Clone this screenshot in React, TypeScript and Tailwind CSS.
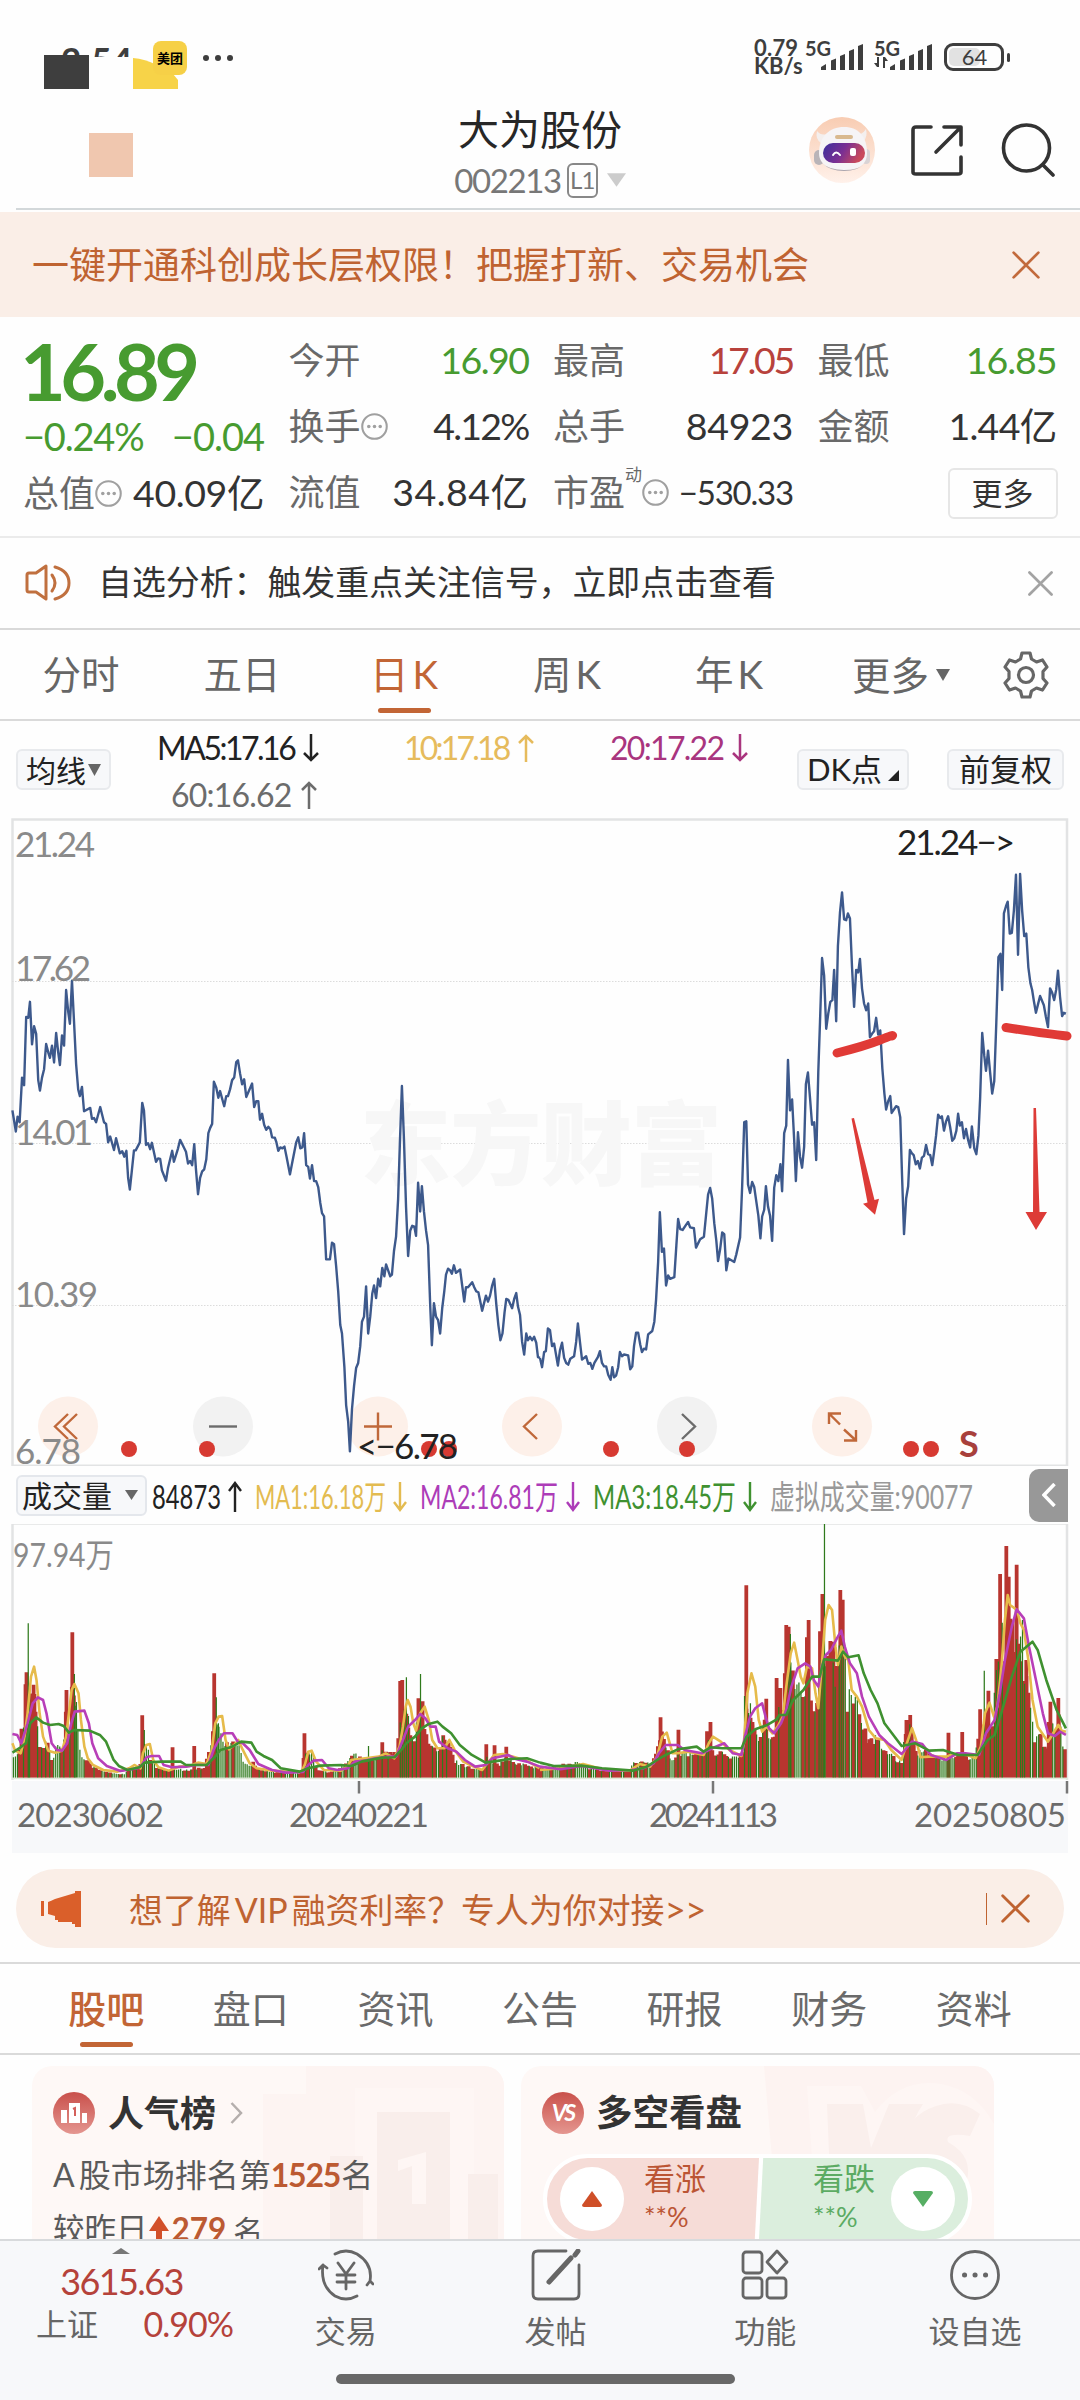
import React from 'react';

// Daily closes, plotted in chart units (two halves of the window, 1568 units wide each)
const PRICE_LEFT =
  '36,690 46,740 51,705 57,718 64,612 70,630 76,468 82,470 87,432 93,533 99,490 105,508 111,618 116,643 122,612 128,592 134,532 140,552 145,565 151,536 157,576 163,506 169,552 174,582 180,512 186,536 192,404 198,455 203,484 209,382 215,480 221,580 227,640 232,656 238,634 244,692 262,684 267,710 273,708 279,718 291,682 302,718 308,722 314,766 320,752 331,784 337,756 348,792 355,787 361,800 367,786 372,850 377,878 383,832 389,785 394,785 406,766 413,672 418,690 424,772 430,768 436,782 441,767 453,812 459,804 465,805 470,832 482,857 488,826 500,786 505,812 517,780 523,760 529,770 540,788 546,816 552,810 558,820 564,770 569,830 575,889 581,850 587,835 593,830 599,806 605,744 610,732 616,722 621,622 628,636 634,660 639,644 651,680 657,656 662,656 668,640 674,618 680,612 686,575 691,571 697,602 703,628 709,616 715,658 732,626 738,682 744,668 750,668 755,712 761,698 767,724 773,736 779,729 785,735 790,754 798,755 802,764 808,786 814,778 820,780 826,776 832,800 842,842 848,816 860,766 866,754 872,780 878,778 883,744 889,820 895,824 900,852 906,820 912,858 918,858 924,872 930,910 935,934 941,942 947,1044 958,1044 964,1004 970,1008 976,1060 982,1120 988,1200 993,1220 1000,1300 1005,1390 1011,1430 1016,1500 1022,1400 1028,1345 1034,1302 1040,1290 1046,1250 1051,1192 1057,1180 1063,1108 1069,1220 1075,1180 1081,1125 1086,1106 1092,1136 1098,1090 1104,1108 1110,1064 1116,1084 1121,1056 1127,1070 1133,1084 1138,1080 1144,1024 1150,990 1156,900 1161,770 1167,632 1173,760 1179,920 1185,1036 1191,976 1197,964 1203,966 1208,988 1214,862 1220,930 1225,870 1231,930 1237,975 1243,1010 1249,1150 1254,1248 1260,1148 1266,1180 1272,1188 1278,1220 1284,1160 1290,1120 1295,1080 1301,1066 1307,1070 1312,1078 1318,1058 1324,1076 1330,1072 1336,1068 1342,1106 1348,1144 1353,1110 1359,1110 1371,1098 1377,1110 1383,1120 1389,1122 1400,1166 1411,1130 1417,1144 1423,1130 1429,1106 1435,1090 1441,1150 1447,1200 1453,1236 1459,1220 1465,1170 1470,1138 1476,1140 1487,1160 1493,1138 1499,1124 1504,1156 1510,1176 1516,1240 1522,1270 1528,1220 1533,1236 1539,1228 1545,1236 1551,1228 1557,1242 1562,1276 1568,1278';
const PRICE_RIGHT =
  '0,1278 6,1300 12,1264 17,1262 23,1208 29,1212 35,1250 41,1244 52,1296 58,1260 64,1242 70,1278 76,1290 82,1294 88,1280 99,1274 105,1240 110,1196 116,1240 122,1282 134,1274 140,1292 146,1290 152,1304 158,1290 168,1276 174,1262 180,1290 186,1298 192,1298 198,1318 205,1330 210,1300 215,1324 221,1320 227,1300 232,1264 238,1274 244,1270 256,1272 262,1305 268,1298 273,1250 279,1218 285,1218 291,1246 296,1264 302,1256 308,1258 314,1222 326,1214 332,1192 337,1140 343,1050 348,932 354,1026 360,1018 366,1106 372,1082 378,1090 390,1086 396,1010 401,948 407,972 414,974 424,962 430,955 436,968 447,970 453,1016 465,996 476,990 482,940 488,890 494,874 500,900 506,958 512,1000 517,1048 523,1020 529,980 535,984 541,1070 547,1042 564,1050 570,1032 581,992 587,870 593,718 599,716 604,866 610,886 616,860 622,872 628,906 634,940 640,994 645,942 651,926 656,870 662,918 668,940 674,1000 680,874 686,844 692,858 698,818 703,882 709,744 715,726 720,570 726,690 732,664 738,760 743,858 749,742 755,800 761,826 767,776 772,628 778,600 784,660 790,724 796,718 802,808 808,600 813,480 819,328 825,370 831,496 837,460 843,432 849,428 854,356 860,478 865,300 871,220 877,172 883,236 889,238 894,222 900,234 906,350 912,444 918,356 924,362 929,330 935,400 941,436 947,452 953,436 958,516 964,508 970,502 976,470 982,510 988,500 994,590 1000,650 1005,688 1011,668 1017,656 1021,696 1034,680 1040,682 1046,706 1051,840 1057,984 1063,900 1069,870 1074,784 1080,792 1085,796 1091,818 1097,810 1103,828 1109,802 1115,798 1121,772 1127,794 1133,796 1139,820 1144,790 1150,750 1156,700 1162,708 1167,704 1173,738 1179,716 1185,704 1191,730 1197,762 1203,756 1209,738 1214,698 1219,726 1225,718 1231,756 1237,734 1243,760 1249,778 1254,728 1261,780 1267,794 1273,750 1278,660 1284,506 1290,560 1295,596 1301,548 1307,600 1313,650 1319,620 1325,480 1331,326 1337,318 1342,404 1347,222 1353,205 1358,194 1364,270 1370,268 1376,215 1382,130 1388,320 1394,128 1400,216 1406,276 1412,270 1418,350 1424,388 1429,404 1434,430 1440,458 1446,438 1452,418 1463,440 1469,468 1475,492 1481,400 1487,410 1493,428 1499,402 1504,358 1510,420 1516,466 1521,458 1527,460';

// Typical volume level per position (x, top), filled with one bar per trading day
const VOLUME_LEFT =
  '36,880 45,890 58,870 62,795 68,800 73,640 95,640 100,700 110,790 115,860 125,870 130,830 140,850 150,900 158,880 165,820 175,870 185,840 190,700 200,850 205,760 210,650 220,700 228,840 236,878 250,890 265,915 290,930 320,938 360,942 380,925 405,920 412,880 425,840 440,900 460,925 490,930 510,925 540,930 570,925 595,920 603,870 612,855 620,800 632,780 645,830 655,850 680,840 695,850 705,900 725,918 735,900 750,925 790,935 830,938 875,938 885,870 905,880 920,925 950,935 985,925 1010,900 1030,880 1060,895 1090,890 1115,870 1150,880 1160,800 1175,750 1190,790 1205,840 1212,760 1230,760 1245,850 1260,860 1275,870 1285,830 1305,850 1320,900 1350,915 1380,925 1405,930 1412,890 1430,900 1450,910 1470,890 1500,910 1530,912 1568,925';
const VOLUME_RIGHT =
  '0,925 60,915 110,905 140,925 200,932 260,930 275,900 290,905 310,910 330,900 340,850 352,800 362,840 385,905 400,880 430,875 460,880 480,870 490,830 505,870 540,880 570,890 588,870 592,640 605,740 615,790 635,840 645,800 655,770 668,830 680,820 690,730 705,720 712,600 725,560 740,640 752,640 762,720 775,620 785,700 798,750 808,700 814,560 822,500 835,580 850,560 862,650 868,520 885,560 892,720 905,670 920,700 935,760 950,830 975,830 1000,860 1030,890 1050,905 1060,800 1080,790 1090,870 1120,870 1150,890 1180,890 1210,880 1260,890 1275,800 1290,780 1300,740 1312,800 1325,620 1335,560 1345,560 1355,440 1365,440 1375,520 1390,480 1400,600 1415,610 1425,750 1437,830 1450,815 1470,870 1480,760 1495,820 1505,760 1520,850 1529,890';

const RED_SPIKES_LEFT: number[][] = [[77, 637], [210, 517], [193, 690], [100, 702], [413, 766], [501, 862], [564, 858], [622, 640], [884, 820], [1110, 847], [1162, 663], [1168, 660], [1215, 715], [1227, 724], [1287, 826], [1412, 853], [1436, 856], [1470, 860]];
const GREEN_SPIKES_LEFT: number[][] = [[82, 490], [216, 642], [222, 726], [419, 810], [628, 712], [634, 790], [1070, 858], [1180, 652], [1186, 768], [1221, 642]];
const RED_SPIKES_RIGHT: number[][] = [[350, 772], [402, 809], [495, 786], [485, 814], [599, 376], [617, 786], [657, 716], [687, 654], [698, 684], [715, 495], [722, 500], [775, 532], [780, 480], [820, 402], [813, 514], [843, 543], [852, 545], [872, 390], [879, 419], [1064, 780], [1075, 765], [1186, 818], [1226, 816], [1278, 748], [1302, 692], [1325, 597], [1336, 342], [1354, 258], [1361, 350], [1384, 314], [1396, 604], [1412, 600], [1482, 725], [1505, 714]];
const GREEN_SPIKES_RIGHT: number[][] = [[611, 730], [727, 522], [826, 190], [1290, 632], [1342, 488], [1401, 480], [1424, 752]];

const MA_LEFT = [
  { color: '#e6bb4a', points: '36,850 44,872 60,880 70,840 80,760 90,650 99,620 106,660 115,760 125,830 140,872 160,878 180,872 192,830 200,760 208,690 216,672 228,700 235,780 245,860 255,895 270,915 300,930 340,935 375,925 390,915 408,925 415,880 425,855 435,852 445,900 460,922 490,932 520,920 550,918 575,908 600,912 615,870 625,790 635,770 645,768 655,840 665,868 680,855 692,840 705,870 725,910 745,925 790,932 830,935 875,935 885,915 895,875 905,872 918,905 940,930 990,932 1010,918 1020,900 1060,895 1100,890 1120,880 1145,895 1160,860 1170,800 1178,740 1184,720 1192,740 1200,790 1208,812 1220,760 1233,740 1245,780 1255,840 1270,865 1290,865 1305,840 1320,870 1345,905 1375,920 1400,930 1415,910 1435,885 1460,882 1490,890 1530,902 1568,926' },
  { color: '#b83fb8', points: '36,822 50,825 62,850 80,790 95,730 110,712 125,720 135,760 150,850 165,870 180,872 195,850 207,790 217,755 245,752 258,790 268,850 285,895 310,918 350,933 400,925 412,915 425,892 440,888 462,888 475,915 500,922 540,920 570,915 605,915 620,870 635,840 650,820 675,820 690,845 705,850 725,870 750,912 790,930 830,938 880,936 895,915 910,902 935,900 955,925 980,930 1010,925 1030,905 1060,902 1090,895 1130,890 1150,890 1170,840 1185,800 1205,780 1220,762 1235,775 1250,800 1265,800 1275,845 1300,865 1325,875 1350,900 1380,920 1410,915 1430,895 1475,885 1500,898 1530,905 1568,920' },
  { color: '#3f9130', points: '36,878 60,862 75,850 88,790 105,772 125,788 145,795 170,792 185,798 200,818 215,810 260,812 290,825 308,845 318,870 330,900 345,918 370,930 405,922 420,908 470,905 525,905 540,915 600,915 620,895 640,870 670,862 700,845 730,848 745,875 765,888 790,900 815,925 870,935 895,925 930,917 990,915 1020,918 1050,905 1110,893 1145,892 1165,870 1180,850 1205,830 1225,805 1245,792 1270,785 1285,800 1310,820 1335,855 1370,885 1410,908 1450,902 1480,897 1530,895 1568,908' },
];
const MA_RIGHT = [
  { color: '#e6bb4a', points: '0,930 60,925 125,912 190,930 260,932 290,912 320,920 340,890 355,830 368,818 385,880 400,880 430,875 475,885 490,850 502,830 525,845 550,870 585,888 592,850 602,700 614,640 625,680 635,780 645,815 658,800 675,820 690,800 705,770 715,680 728,580 738,548 748,600 757,650 765,670 775,620 790,625 800,700 808,745 818,620 828,480 838,435 848,450 858,560 865,615 875,560 885,590 895,600 905,690 920,710 935,740 955,810 975,835 1000,840 1020,870 1050,900 1065,850 1080,805 1092,840 1105,892 1130,890 1180,890 1200,882 1240,885 1265,895 1280,860 1292,760 1305,728 1318,770 1328,740 1340,620 1350,480 1358,405 1365,435 1385,450 1395,490 1405,510 1418,600 1430,720 1445,800 1475,845 1490,820 1505,795 1515,812 1527,815' },
  { color: '#b83fb8', points: '0,920 60,928 120,918 200,932 265,930 300,925 330,910 345,880 365,855 400,855 420,870 470,880 500,865 535,850 560,880 585,885 595,830 610,770 625,745 645,730 655,770 665,805 680,820 700,790 715,750 730,680 748,625 770,610 785,620 795,660 808,680 818,620 830,585 845,570 862,535 875,512 885,560 900,610 920,640 935,710 955,770 985,825 1010,850 1050,882 1080,845 1110,852 1135,885 1180,900 1210,880 1235,880 1275,885 1295,820 1320,780 1335,700 1350,600 1370,500 1384,448 1405,475 1420,560 1440,660 1460,760 1475,820 1495,828 1510,815 1527,825' },
  { color: '#3f9130', points: '0,908 40,918 120,917 180,925 270,932 310,920 340,900 365,885 400,868 455,860 475,875 495,862 530,865 585,865 600,830 625,808 660,795 685,780 695,765 715,765 735,720 765,690 790,650 812,650 825,598 865,602 880,575 895,592 925,586 940,640 960,690 980,730 1000,790 1050,858 1090,850 1130,872 1170,870 1215,885 1270,885 1300,840 1320,825 1345,740 1370,650 1395,575 1430,545 1445,570 1470,660 1500,750 1527,805' },
];

const VOLUME_BASE = 953;
const DAY_STEP = 5.85;

function toPoints(text: string) {
  return text.split(' ').map((pair) => pair.split(',').map(Number));
}

function levelAt(points: number[][], x: number) {
  for (let i = 1; i < points.length; i++) {
    const [x0, y0] = points[i - 1];
    const [x1, y1] = points[i];
    if (x <= x1) return y0 + ((y1 - y0) * (x - x0)) / (x1 - x0);
  }
  return points[points.length - 1][1];
}

function noise(i: number) {
  const v = Math.sin(i * 127.1) * 43758.5453;
  return v - Math.floor(v);
}

function buildBars(levels: string, redSpikes: number[][], greenSpikes: number[][], seed: number) {
  const points = toPoints(levels);
  const last = points[points.length - 1][0];
  let red = '';
  let green = '';
  let i = seed;
  for (let x = points[0][0] + 3; x < last; x += DAY_STEP) {
    const height = (VOLUME_BASE - levelAt(points, x)) * (0.8 + 0.25 * noise(i));
    const bar = `M${x.toFixed(1)} ${VOLUME_BASE}v${-height.toFixed(1)}`;
    if (noise(i + 1000) < 0.52) red += bar;
    else green += bar;
    i++;
  }
  redSpikes.forEach(([x, y]) => (red += `M${x} ${VOLUME_BASE}V${y}`));
  greenSpikes.forEach(([x, y]) => (green += `M${x} ${VOLUME_BASE}V${y}`));
  return { red, green };
}

const BARS_LEFT = buildBars(VOLUME_LEFT, RED_SPIKES_LEFT, GREEN_SPIKES_LEFT, 1);
const BARS_RIGHT = buildBars(VOLUME_RIGHT, RED_SPIKES_RIGHT, GREEN_SPIKES_RIGHT, 400);

function CloseIcon({ size, color, width = 2.5 }: { size: number; color: string; width?: number }) {
  return (
    <svg width={size} height={size} viewBox="0 0 26 26" fill="none" stroke={color} strokeWidth={width} strokeLinecap="round">
      <path d="M1.5 1.5 24.5 24.5M24.5 1.5 1.5 24.5" />
    </svg>
  );
}

function InfoDots() {
  return (
    <svg width="27" height="27" viewBox="0 0 26 26" fill="#a0a0a0">
      <circle cx="13" cy="13" r="11.8" fill="none" stroke="#a0a0a0" strokeWidth="2" />
      <circle cx="7.5" cy="13" r="1.7" />
      <circle cx="13" cy="13" r="1.7" />
      <circle cx="18.5" cy="13" r="1.7" />
    </svg>
  );
}

function Signal() {
  return (
    <svg width="44" height="28" viewBox="0 0 44 28" fill="#3e3e3e">
      <path d="M1 27v-3l5-3v6zM11 27V17.500l5-2V27zM20 27V13l5-2V27zM29 27V8l5-2v21zM38 27V3l5-2v26z" />
    </svg>
  );
}

function StatusBar() {
  return (
    <div className="flex h-[104px] text-[#3e3e3e]">
      <div className="relative h-full w-[250px]">
        <span className="absolute left-[61px] top-[41px] h-[16px] overflow-hidden text-[35px] font-bold leading-[37px] tracking-[0.500px]">2:54</span>
        <div className="absolute left-[44px] top-[55px] h-[34px] w-[45px] bg-[#3e3e3e]" />
        <svg className="absolute left-[133px] top-[56px]" width="46" height="33" viewBox="0 0 46 33">
          <path d="M0 2Q12 3 24 9L40 18 45 24V33H0Z" fill="#f7d348" />
        </svg>
        <div className="absolute left-[153px] top-[41px] flex h-[34px] w-[34px] items-center justify-center rounded-[8px] bg-[#f6d047] text-[13px] font-bold leading-none text-black">
          美团
        </div>
        <div className="absolute left-[203px] top-[55px] flex gap-[6px]">
          <i className="h-[6px] w-[6px] rounded-full bg-[#3e3e3e]" />
          <i className="h-[6px] w-[6px] rounded-full bg-[#3e3e3e]" />
          <i className="h-[6px] w-[6px] rounded-full bg-[#3e3e3e]" />
        </div>
      </div>
      <div className="ml-auto flex pr-[70px] pt-[39px] font-bold">
        <div className="w-[51px] text-[22px] leading-[18px]">
          <div className="tracking-[0.200px]">0.79</div>
          <div>KB/s</div>
        </div>
        <div className="flex w-[69px]">
          <span className="w-[15px] whitespace-nowrap text-[20px] leading-[18px]">5G</span>
          <div className="pt-[4px]"><Signal /></div>
        </div>
        <div className="flex w-[70px]">
          <div className="w-[15px] text-[20px] leading-[18px]">
            <span className="whitespace-nowrap">5G</span>
            <svg width="14" height="11" viewBox="0 0 14 11" fill="#3e3e3e">
              <path d="M3 0h2v10H3L0 6h3zM9 11h2V4h3l-3-4H9z" />
            </svg>
          </div>
          <div className="pt-[4px]"><Signal /></div>
        </div>
        <div className="mt-[4px] flex h-[28px] items-center">
          <div className="flex h-[28px] w-[60px] rounded-[9px] border-[3px] border-[#3e3e3e] p-[2px]">
            <div className="flex h-full w-[31px] items-center justify-center rounded-[5px] bg-[#e2e2e2]">
              <span className="pl-[20px] text-[22px] font-normal leading-none">64</span>
            </div>
          </div>
          <i className="ml-[3px] h-[9px] w-[3px] rounded bg-[#3e3e3e]" />
        </div>
      </div>
    </div>
  );
}

function RobotAvatar() {
  return (
    <svg width="68" height="68" viewBox="0 0 68 68">
      <defs>
        <linearGradient id="halo" x1="0" y1="0" x2="0" y2="1">
          <stop offset="0" stopColor="#f8ccb2" />
          <stop offset="1" stopColor="#fff1ea" />
        </linearGradient>
        <linearGradient id="visor" x1="0" y1="0" x2="1" y2="0.3">
          <stop offset="0" stopColor="#3c2f9c" />
          <stop offset="0.55" stopColor="#7a2f93" />
          <stop offset="1" stopColor="#c94a5c" />
        </linearGradient>
      </defs>
      <circle cx="34" cy="34" r="33" fill="url(#halo)" />
      <path d="M9 15q-2 8 4 12l6-9q-6 2-10-3zM58 13q2 8-3 13l-7-7q6 0 10-6z" fill="#f4efee" />
      <rect x="6" y="34" width="10" height="15" rx="5" fill="#b9b4b8" />
      <rect x="54" y="33" width="8" height="15" rx="4" fill="#d9d3d5" />
      <path d="M36 11c15 0 23 10 23 26 0 12-9 17-23 17s-25-5-25-17c0-16 10-26 25-26z" fill="#f6f4f6" />
      <path d="M14 47q8 8 22 8t20-7q-5 6-20 6t-22-7z" fill="#aaa5ae" />
      <rect x="27" y="19" width="18" height="4" rx="2" fill="#d9b98f" />
      <rect x="15" y="27" width="42" height="20" rx="10" fill="url(#visor)" />
      <path d="M25 39q3-5 7 0" fill="none" stroke="#fff" strokeWidth="2" strokeLinecap="round" />
      <rect x="42" y="32" width="6" height="8" rx="2" fill="#fff" />
    </svg>
  );
}

function Header() {
  return (
    <header className="flex h-[108px]">
      <div className="w-[400px] pl-[89px] pt-[29px]">
        <div className="h-[44px] w-[44px] bg-[#f0c7af]" />
      </div>
      <div className="flex w-[280px] flex-col items-center">
        <h1 className="mt-[4px] text-[41px] leading-[44px] text-[#272727]">大为股份</h1>
        <div className="mt-[9px] flex h-[38px] items-center text-[#777]">
          <span className="text-[33px] leading-none tracking-[-1.400px]">002213</span>
          <span className="ml-[6px] flex h-[35px] w-[31px] items-center justify-center rounded-[6px] border-2 border-[#888] text-[24px] leading-none tracking-[-1px]">L1</span>
          <svg className="ml-[9px]" width="19" height="14" viewBox="0 0 20 14" fill="#ccc">
            <path d="M0 0h20L10 14z" />
          </svg>
        </div>
      </div>
      <div className="flex w-[400px] pl-[128px]">
        <div className="w-[103px] pt-[12px]"><RobotAvatar /></div>
        <svg className="mt-[20px]" width="52" height="52" viewBox="0 0 52 52" fill="none" stroke="#333" strokeWidth="3.600" strokeLinecap="round" strokeLinejoin="round">
          <path d="M20 3H5Q2 3 2 6v42q0 2 3 2h42q3 0 3-2V33M33 3h17v18M49 4 25 28" />
        </svg>
        <svg className="ml-[38px] mt-[19px]" width="54" height="54" viewBox="0 0 54 54" fill="none" stroke="#333" strokeWidth="3.600" strokeLinecap="round">
          <circle cx="25.500" cy="25" r="23" />
          <path d="M42 42 52 52" />
        </svg>
      </div>
    </header>
  );
}

function Stat({ label, value, className = 'text-[#333]', children }: { label: string; value: string; className?: string; children?: React.ReactNode }) {
  return (
    <div className="flex h-[66px] items-center justify-between text-[37.500px] leading-none">
      <span className="flex items-center text-[36px] text-[#696969]">
        {label}
        {children}
      </span>
      <span className={`whitespace-nowrap ${className}`}>{value}</span>
    </div>
  );
}

function Quote() {
  return (
    <section className="grid h-[221px] grid-cols-[241px_240px_240px_239px] gap-x-[24.500px] border-b-2 border-[#ebebeb] pl-[23px] pt-[10px]">
      <div>
        <div className="-ml-[3px] h-[86px] pt-[5px] text-[79px] font-bold leading-[78px] tracking-[-5.500px] text-[#479b30]">16.89</div>
        <div className="flex h-[47px] items-center justify-between text-[38px] leading-[47px] text-[#479b30]">
          <span className="tracking-[-1.200px]">−0.24%</span>
          <span className="tracking-[-1px]">−0.04</span>
        </div>
        <Stat label="总值" value="40.09亿" className="tracking-[-0.400px] text-[#333]"><InfoDots /></Stat>
      </div>
      <div>
        <Stat label="今开" value="16.90" className="tracking-[-1.500px] text-[#479b30]" />
        <Stat label="换手" value="4.12%" className="tracking-[-1.800px] text-[#333]"><InfoDots /></Stat>
        <Stat label="流值" value="34.84亿" className="text-[#333] tracking-[0.500px]" />
      </div>
      <div>
        <Stat label="最高" value="17.05" className="tracking-[-2.300px] text-[#b8423c]" />
        <Stat label="总手" value="84923" className="tracking-[-0.300px] text-[#333]" />
        <Stat label="市盈" value="−530.33" className="text-[33px] tracking-[-1.200px] text-[#333]">
          <sup className="top-[-18px] text-[17px] leading-none">动</sup>
          <InfoDots />
        </Stat>
      </div>
      <div>
        <Stat label="最低" value="16.85" className="tracking-[-1px] text-[#479b30]" />
        <Stat label="金额" value="1.44亿" className="tracking-[-0.700px] text-[#333]" />
        <div className="-mr-[1px] ml-auto mt-[9px] flex h-[51px] w-[110px] items-center justify-center rounded-[6px] border-2 border-[#e6e6e6] text-[31px] leading-none text-[#333]">更多</div>
      </div>
    </section>
  );
}

function Notice() {
  return (
    <div className="flex h-[92px] items-center border-b-2 border-[#d9d9d9] pl-[24px] pr-[27px]">
      <svg width="48" height="40" viewBox="0 0 48 40" fill="none" stroke="#c0703f" strokeWidth="3" strokeLinejoin="round" strokeLinecap="round">
        <path d="M22 3v33L12 29H5q-2 0-2-2V12q0-2 2-2h7zM28 12q6 8 0 16M31 4q14 4 14 16T31 36" />
      </svg>
      <p className="ml-[26px] text-[33.900px] leading-none text-[#333]">自选分析：触发重点关注信号，立即点击查看</p>
      <div className="ml-auto"><CloseIcon size={25} color="#a3a3a3" width={2.8} /></div>
    </div>
  );
}

function PeriodTabs() {
  return (
    <nav className="flex h-[91px] border-b-2 border-[#dadada] text-[38.500px] leading-[88px] text-[#666]">
      <span className="w-[162px] text-center">分时</span>
      <span className="w-[160px] text-center">五日</span>
      <span className="flex w-[164px] flex-col items-center whitespace-pre text-[#c26535]">
        <span className="h-[78px]">日<span className="ml-[4px]">K</span></span>
        <i className="h-[5px] w-[53px] rounded bg-[#c26535]" />
      </span>
      <span className="w-[162px] text-center">周<span className="ml-[4px]">K</span></span>
      <span className="w-[162px] text-center">年<span className="ml-[4px]">K</span></span>
      <span className="ml-[42px] flex items-center">
        更多
        <svg className="ml-[7px]" width="14" height="12" viewBox="0 0 14 12" fill="#666"><path d="M0 0h14L7 12z" /></svg>
      </span>
      <svg className="ml-[52px] mt-[21px]" width="48" height="48" viewBox="0 0 48 48" fill="none" stroke="#666" strokeWidth="3.200" strokeLinejoin="round">
        <path d="M20 2h8l1.500 6 5 3 6-2 4.500 7-4 4.500v7l4 4.500-4.500 7-6-2-5 3L28 46h-8l-1.500-6-5-3-6 2L3 32l4-4.500v-7L3 16l4.500-7 6 2 5-3z" />
        <circle cx="24" cy="24" r="7.500" />
      </svg>
    </nav>
  );
}

function AverageRow() {
  return (
    <div className="flex h-[97px] pl-[16px] text-[31px] leading-none text-[#222]">
      <div className="mt-[28px] flex h-[41px] w-[95px] items-center justify-center rounded-[6px] border-2 border-[#e8eaed] bg-[#f7f8fa] text-[30px]">
        均线
        <svg className="ml-[2px]" width="13" height="12" viewBox="0 0 13 12" fill="#666"><path d="M0 0h13L6.500 12z" /></svg>
      </div>
      <div className="ml-[46px] mt-[3px] grid h-[94px] w-[601px] grid-cols-[247px_206px_148px] grid-rows-[47px_47px] items-center text-[32px]">
        <span className="flex items-center tracking-[-2.500px]">MA5:17.16<Arrow color="#222" /></span>
        <span className="flex items-center tracking-[-2.800px] text-[#e6bb5c]">10:17.18<Arrow color="#e6bb5c" up /></span>
        <span className="flex items-center tracking-[-1.700px] text-[#a9357e]">20:17.22<Arrow color="#a9357e" /></span>
        <span className="flex items-center pl-[14px] tracking-[-0.800px] text-[#6c6c6c]">60:16.62<Arrow color="#6c6c6c" up /></span>
      </div>
      <div className="ml-[39px] mt-[28px] flex h-[41px] w-[112px] items-center justify-center rounded-[6px] border-2 border-[#e8eaed] bg-[#f7f8fa]">
        DK点
        <svg className="ml-[6px] mt-[12px]" width="11" height="11" viewBox="0 0 11 11"><path d="M11 0v11H0z" fill="#222" /></svg>
      </div>
      <div className="ml-[38px] mt-[28px] flex h-[41px] w-[117px] items-center justify-center rounded-[6px] border-2 border-[#e8eaed] bg-[#f7f8fa]">前复权</div>
    </div>
  );
}

function Arrow({ color, up = false }: { color: string; up?: boolean }) {
  return (
    <svg className="ml-[9px] shrink-0" width="16" height="28" viewBox="0 0 16 28" fill="none" stroke={color} strokeWidth="2.500">
      <path d={up ? 'M8 28V2M1 9 8 2l7 7' : 'M8 0v26M1 19l7 7 7-7'} />
    </svg>
  );
}

const TOOL_BUTTONS = [
  { x: 68, fill: '#fdf0e9', stroke: '#c0683a', d: 'M68 1414l-13 12.500 13 12.500M77 1414l-13 12.500 13 12.500' },
  { x: 223, fill: '#f2f2f2', stroke: '#6c6c6c', d: 'M209 1426.500h28' },
  { x: 378, fill: '#fdf0e9', stroke: '#c0683a', d: 'M364 1426.500h28M378 1412.500v28' },
  { x: 532, fill: '#fdf0e9', stroke: '#c0683a', d: 'M537 1414l-13 12.500 13 12.500' },
  { x: 687, fill: '#f2f2f2', stroke: '#6c6c6c', d: 'M682 1414l13 12.500-13 12.500' },
  { x: 842, fill: '#fdf0e9', stroke: '#c0683a', d: 'M829 1424v-10.500h12M829 1413.500l11 11M856 1430v10.500h-12M856 1440.500l-12-11' },
];

function PriceChart() {
  return (
    <svg className="block" width="1080" height="648" viewBox="0 818 1080 648">
      <path d="M12.500 1466V819.500H1067V1466" fill="none" stroke="#e2e3e4" strokeWidth="2.500" />
      <path d="M12 1465.500H1068" stroke="#e2e3e4" strokeWidth="2" />
      <path d="M12 981.500H1068M12 1143.500H1068M12 1305.500H1068" stroke="#dcdcdc" strokeWidth="1" strokeDasharray="1.500 1.500" />
      <text x="360" y="1178" textLength="362" fontSize="91" fontWeight="900" fill="#f7f7f7">东方财富</text>
      {TOOL_BUTTONS.map((button) => (
        <g key={button.x}>
          <circle cx={button.x} cy="1426.500" r="30" fill={button.fill} />
          <path d={button.d} fill="none" stroke={button.stroke} strokeWidth="2.400" />
        </g>
      ))}
      {[129, 207, 429, 449, 611, 687, 911, 931].map((x) => (
        <circle key={x} cx={x} cy="1449" r="8" fill="#d73a32" />
      ))}
      <text x="959" y="1456.500" fontSize="36" fontWeight="700" fill="#a8403c">S</text>
      <g fill="none" stroke="#3d598c" strokeWidth="2.400" strokeLinejoin="round">
        <polyline points={PRICE_LEFT} transform="translate(0 820) scale(.3444 .4209)" vectorEffect="non-scaling-stroke" />
        <polyline points={PRICE_RIGHT} transform="translate(540 820) scale(.3444 .4209)" vectorEffect="non-scaling-stroke" />
      </g>
      <g fontSize="35" fill="#8a8a8a">
        <text x="15" y="857" textLength="80">21.24</text>
        <text x="15" y="981" textLength="76">17.62</text>
        <text x="15" y="1144.500" textLength="78">14.01</text>
        <text x="15" y="1306.500" textLength="83">10.39</text>
        <text x="15" y="1464" textLength="66">6.78</text>
      </g>
      <g fontSize="35" fill="#222">
        <text x="897" y="854.500" textLength="118">21.24−&gt;</text>
        <text x="357" y="1459" textLength="101">&lt;−6.78</text>
      </g>
      <g stroke="#e03a36" strokeWidth="9" strokeLinecap="round" fill="none">
        <path d="M837 1053Q865 1046 880 1040T892 1036" />
        <path d="M1006 1027.500Q1048 1034 1067 1036" />
      </g>
      <g fill="#dd3b37">
        <path d="M851.500 1118.500l2.500-.5 20.500 82 4.500-1.200-4 16-12-11 4.500-1.200z" />
        <path d="M1033.500 1108h2.500l3.500 104h7.500l-11 18-10.500-18h7.500z" />
      </g>
    </svg>
  );
}

function VolumeHeader() {
  return (
    <div className="flex h-[58px] items-center pl-[16px] text-[31px] leading-none">
      <div className="flex h-[41px] w-[131px] items-center rounded-[6px] border-2 border-[#e4e7ec] bg-[#f7f8fa] pl-[4px] text-[30px] text-[#222]">
        成交量
        <svg className="ml-[13px]" width="13" height="10" viewBox="0 0 13 10" fill="#666"><path d="M0 0h13L6.500 10z" /></svg>
      </div>
      <svg width="882" height="58" viewBox="147 1466 882 58" fontSize="33">
        <g fill="#222"><text x="152" y="1509" textLength="69" lengthAdjust="spacingAndGlyphs">84873</text></g>
        <g fill="#e3bb50"><text x="255" y="1509" textLength="131" lengthAdjust="spacingAndGlyphs">MA1:16.18万</text></g>
        <g fill="#ad3cb8"><text x="420" y="1509" textLength="138" lengthAdjust="spacingAndGlyphs">MA2:16.81万</text></g>
        <g fill="#3f9130"><text x="593" y="1509" textLength="143" lengthAdjust="spacingAndGlyphs">MA3:18.45万</text></g>
        <g fill="#999"><text x="770" y="1509" textLength="203" lengthAdjust="spacingAndGlyphs">虚拟成交量:90077</text></g>
        <g fill="none" strokeWidth="2.400">
          <path d="M235 1512v-29M229 1491l6-8 6 8" stroke="#222" />
          <path d="M400 1482v28M394 1502l6 8 6-8" stroke="#e3bb50" />
          <path d="M573 1482v28M567 1502l6 8 6-8" stroke="#ad3cb8" />
          <path d="M750 1482v28M744 1502l6 8 6-8" stroke="#3f9130" />
        </g>
      </svg>
      <div className="flex h-[53px] w-[39px] items-center justify-center rounded-l-[10px] bg-[#989898]">
        <svg width="14" height="24" viewBox="0 0 14 24" fill="none" stroke="#fff" strokeWidth="3.500"><path d="M12.500 1 2 12l10.500 11" /></svg>
      </div>
    </div>
  );
}

function VolumeChart() {
  const halves = [
    { offset: 0, bars: BARS_LEFT, lines: MA_LEFT },
    { offset: 540, bars: BARS_RIGHT, lines: MA_RIGHT },
  ];
  return (
    <svg className="block" width="1080" height="329" viewBox="0 1524 1080 329">
      <path d="M12.500 1780V1523.500H1067V1780" fill="none" stroke="#e2e3e4" strokeWidth="2.500" />
      <text x="13" y="1567" fontSize="33" fill="#8a8a8a" textLength="101" lengthAdjust="spacingAndGlyphs">97.94万</text>
      {halves.map((half) => (
        <g key={half.offset} transform={`translate(${half.offset} 1460) scale(.3444 .3333)`} fill="none">
          <path d={half.bars.red} stroke="#b8352f" strokeWidth="11" />
          <path d={half.bars.green} stroke="#2f7a1c" strokeWidth="3.600" />
          {half.lines.map((line) => (
            <polyline key={line.color} points={line.points} stroke={line.color} strokeWidth="2.600" strokeLinejoin="round" vectorEffect="non-scaling-stroke" />
          ))}
        </g>
      ))}
      <path d="M12 1778.500H1068" stroke="#dfe9d9" strokeWidth="1.500" />
      <rect x="12" y="1781" width="1056" height="72" fill="#f7f8fa" />
      <path d="M359 1781v12.500M713 1781v12.500M1067 1781v12.500" stroke="#777" strokeWidth="2.500" />
      <g fontSize="33" fill="#6b6b6b">
        <text x="17" y="1827" textLength="147">20230602</text>
        <text x="289" y="1827" textLength="140">20240221</text>
        <text x="649" y="1827" textLength="129">20241113</text>
        <text x="914" y="1827" textLength="152">20250805</text>
      </g>
    </svg>
  );
}

function VipBanner() {
  return (
    <div className="mx-[16px] mt-[16px] flex h-[79px] items-center rounded-full bg-[#faeee7] pl-[25px] pr-[34px]">
      <svg width="42" height="36" viewBox="0 0 42 36" fill="#da5f2a">
        <path d="M0 10h3v15H0zM7 11Q10 10 14 8L34 2V0h6v36h-6v-3h-3v-2H17v-2h-3v-4L7 23z" />
      </svg>
      <p className="ml-[46px] whitespace-nowrap text-[33.900px] leading-none text-[#bf6331]">
        想了解<span className="mx-[4px] text-[34px]">VIP</span>融资利率？专人为你对接<span className="text-[37px] tracking-[-1px]">&gt;&gt;</span>
      </p>
      <i className="ml-auto mr-[14px] h-[32px] w-[1px] bg-[#bf6331]" />
      <CloseIcon size={29} color="#bf6331" />
    </div>
  );
}

const SECTIONS = ['股吧', '盘口', '资讯', '公告', '研报', '财务', '资料'];

function SectionTabs() {
  return (
    <nav className="mt-[14px] grid h-[93px] grid-cols-7 border-y-2 border-[#dadada] px-[34px] text-[38px] leading-[89px] text-[#6a6a6a]">
      {SECTIONS.map((name, i) => (
        <span key={name} className={i === 0 ? 'flex flex-col items-center font-medium text-[#c26535]' : 'text-center'}>
          <span className="h-[78px]">{name}</span>
          {i === 0 && <i className="h-[5px] w-[53px] rounded bg-[#c26535]" />}
        </span>
      ))}
    </nav>
  );
}

function Cards() {
  return (
    <section className="flex h-[184px] items-start gap-[17px] overflow-hidden pl-[32px] pt-[11px]">
      <div className="relative h-[220px] w-[472px] overflow-hidden rounded-[20px] bg-[#fef8f6]">
        <svg className="absolute left-0 top-0" width="473" height="220" viewBox="0 0 473 220">
          <path d="M274 0h199v220H231V28h43z" fill="#fdf4f2" />
          <path d="M323 22h119v190H323z" fill="#fef6f4" />
          <path d="M345 46h73v174h-73zM298 90h33v130h-33zM436 108h30v112h-30z" fill="#f9eeeb" />
          <path d="M394 86v52h-14v-38l-14 5V94z" fill="#fef6f4" />
        </svg>
        <div className="relative flex h-[93px] items-center pl-[21px]">
          <svg width="42" height="42" viewBox="0 0 42 42">
            <defs>
              <linearGradient id="badge" x1="0" y1="0" x2="0" y2="1">
                <stop offset="0" stopColor="#c9504b" />
                <stop offset="1" stopColor="#e49690" />
              </linearGradient>
            </defs>
            <circle cx="21" cy="21" r="21" fill="url(#badge)" />
            <path d="M8 18h6v13H8zM16 11h11v20H16zM29 21h5v10h-5z" fill="#fff" />
            <path d="M20 17l2-1v8" stroke="#d4605b" strokeWidth="2" fill="none" />
          </svg>
          <h2 className="ml-[13px] text-[36px] font-bold leading-none text-[#333]">人气榜</h2>
          <svg className="ml-[14px]" width="13" height="22" viewBox="0 0 13 22" fill="none" stroke="#b5afad" strokeWidth="2.500"><path d="M1.500 1 11 11 1.500 21" /></svg>
        </div>
        <p className="relative h-[56px] whitespace-nowrap pl-[21px] text-[32px] leading-[31px] text-[#5a5a5a]">
          A<span className="ml-[4px]">股市场排名第</span><b className="tracking-[-1.200px] text-[#bc5a32]">1525</b><span className="ml-[1px]">名</span>
        </p>
        <p className="relative flex h-[30px] items-center whitespace-nowrap pl-[21px] text-[31.500px] leading-none text-[#5a5a5a]">
          较昨日
          <svg width="22" height="28" viewBox="0 0 22 28" fill="#d2502a"><path d="M11 0 21 15h-7v13H8V15H1z" /></svg>
          <b className="ml-[2px] text-[#bc5a32]">279</b>
          <span className="ml-[7px] text-[30px]">名</span>
        </p>
      </div>
      <div className="relative h-[220px] w-[473px] overflow-hidden rounded-[20px] bg-[#fef8f6]">
        <svg className="absolute left-0 top-0" width="473" height="220" viewBox="0 0 473 220">
          <path d="M243 0h230v220H262z" fill="#fdf3f1" />
          <path d="M286 20h54l14 26q26-34 66-28 34 6 53 40v162H300z" fill="#fef6f4" />
          <path d="M306 38h36l8 44 18-44h34q-20 30-12 60h-26l-22 40h-32z" fill="#faefec" />
          <path d="M459 48q-20-16-44-8-30 10-32 38 0 16 22 26 10 6-4 8l-18-4-10 30q30 14 58-4 22-18 14-40-4-10-18-18-4-10 22-6z" fill="#faefec" />
        </svg>
        <div className="relative flex h-[93px] items-center pl-[21px]">
          <div className="flex h-[42px] w-[42px] items-center justify-center rounded-full bg-linear-to-b from-[#c9504b] to-[#e49690] text-[23px] font-bold italic leading-none tracking-[-2px] text-white">VS</div>
          <h2 className="ml-[12px] text-[36.500px] font-bold leading-none text-[#333]">多空看盘</h2>
        </div>
        <div className="relative -mt-[5px] ml-[22px] flex h-[90px] w-[429px] overflow-hidden rounded-full border-4 border-white bg-white text-[31px]">
          <div className="flex w-[212px] shrink-0 items-center bg-[#f6dcd7] pl-[13px] text-[#bb5534] [clip-path:polygon(0_0,100%_0,98%_100%,0_100%)]">
            <div className="flex h-[64px] w-[64px] items-center justify-center rounded-full bg-white">
              <svg width="20" height="16" viewBox="0 0 20 16"><path d="M10 0 20 14q0 2-2 2H2q-2 0-2-2z" fill="#cf4f28" /></svg>
            </div>
            <div className="ml-[20px] flex h-full flex-col pt-[4px] leading-[33px]">
              <span>看涨</span>
              <span className="pt-[5px] text-[27px]">**%</span>
            </div>
          </div>
          <div className="flex w-[209px] shrink-0 items-center bg-[#dbeedd] pl-[54px] text-[#5cab63] [clip-path:polygon(2%_0,100%_0,100%_100%,0_100%)]">
            <div className="flex h-full w-[62px] shrink-0 flex-col pt-[4px] leading-[33px]">
              <span>看跌</span>
              <span className="pt-[5px] text-[27px]">**%</span>
            </div>
            <div className="ml-[16px] flex h-[64px] w-[64px] shrink-0 items-center justify-center rounded-full bg-white">
              <svg width="20" height="16" viewBox="0 0 20 16"><path d="M10 16 20 2q0-2-2-2H2Q0 0 0 2z" fill="#56ae63" /></svg>
            </div>
          </div>
        </div>
      </div>
    </section>
  );
}

function NavItem({ label, children }: { label: string; children: React.ReactNode }) {
  return (
    <div className="flex w-[209.700px] flex-col items-center pt-[8px] text-[#666]">
      <svg width="56" height="52" viewBox="0 0 56 52" fill="none" stroke="#666" strokeWidth="2.800" strokeLinecap="round" strokeLinejoin="round">
        {children}
      </svg>
      <span className="mt-[14px] text-[31px] leading-[32px]">{label}</span>
    </div>
  );
}

function BottomBar() {
  return (
    <footer className="h-[162px] border-t-2 border-[#d8dadc] bg-[#f7f8fa]">
      <div className="flex h-[133px]">
        <div className="w-[241px] pt-[7px]">
          <svg className="ml-[112px] block" width="18" height="6" viewBox="0 0 18 6" fill="#777"><path d="M9 0 18 6H0z" /></svg>
          <div className="mt-[8px] pl-[2px] text-center text-[36px] leading-[38px] tracking-[-1.600px] text-[#b5423a]">3615.63</div>
          <div className="ml-[36px] mt-[5px] flex w-[197px] items-center justify-between text-[31px] leading-[38px] text-[#666]">
            上证<span className="text-[34px] tracking-[-1px] text-[#b5423a]">0.90%</span>
          </div>
        </div>
        <NavItem label="交易">
          <path d="M17 5Q28-1 39 5 55 15 52 32l3 3M39 47Q28 53 17 47 2 37 5 16L1 20M5 16l4 3M49 36l3-4" />
          <path d="M20 14l8 11 8-11M28 25v15M19 26h18M19 33h18" />
        </NavItem>
        <NavItem label="发帖">
          <path d="M38 2H10Q5 2 5 7v38q0 5 5 5h36q5 0 5-5V16" />
          <path d="M21 33 43 9M50 2l-3 4" strokeWidth="5" />
        </NavItem>
        <NavItem label="功能">
          <rect x="6" y="3" width="19" height="21" rx="3" />
          <rect x="6" y="29" width="19" height="20" rx="3" />
          <rect x="30" y="29" width="19" height="20" rx="3" />
          <path d="M40 2 50 13 40 24 30 13z" />
        </NavItem>
        <NavItem label="设自选">
          <circle cx="28" cy="26" r="23.500" />
          <path d="M17.500 26h.1M28 26h.1M38.500 26h.1" strokeWidth="5" />
        </NavItem>
      </div>
      <div className="ml-[336px] h-[10px] w-[399px] rounded-full bg-[#686868]" />
    </footer>
  );
}

export default function App() {
  return (
    <main className="h-[2400px] w-[1080px] overflow-hidden bg-[#fefefe] font-['Lato','Noto_Sans_CJK_SC',sans-serif]">
      <StatusBar />
      <Header />
      <div className="relative z-10 -mt-[4px] mb-[2px] ml-[16px] h-[2px] bg-[#d3d8da]" />
      <div className="flex h-[105px] items-center justify-between bg-[#faeee7] pl-[32px] pr-[40px]">
        <p className="whitespace-nowrap text-[37px] leading-none text-[#bf6331]">一键开通科创成长层权限！把握打新、交易机会</p>
        <CloseIcon size={28} color="#c26a3c" />
      </div>
      <Quote />
      <Notice />
      <PeriodTabs />
      <AverageRow />
      <PriceChart />
      <VolumeHeader />
      <VolumeChart />
      <VipBanner />
      <SectionTabs />
      <Cards />
      <BottomBar />
    </main>
  );
}
